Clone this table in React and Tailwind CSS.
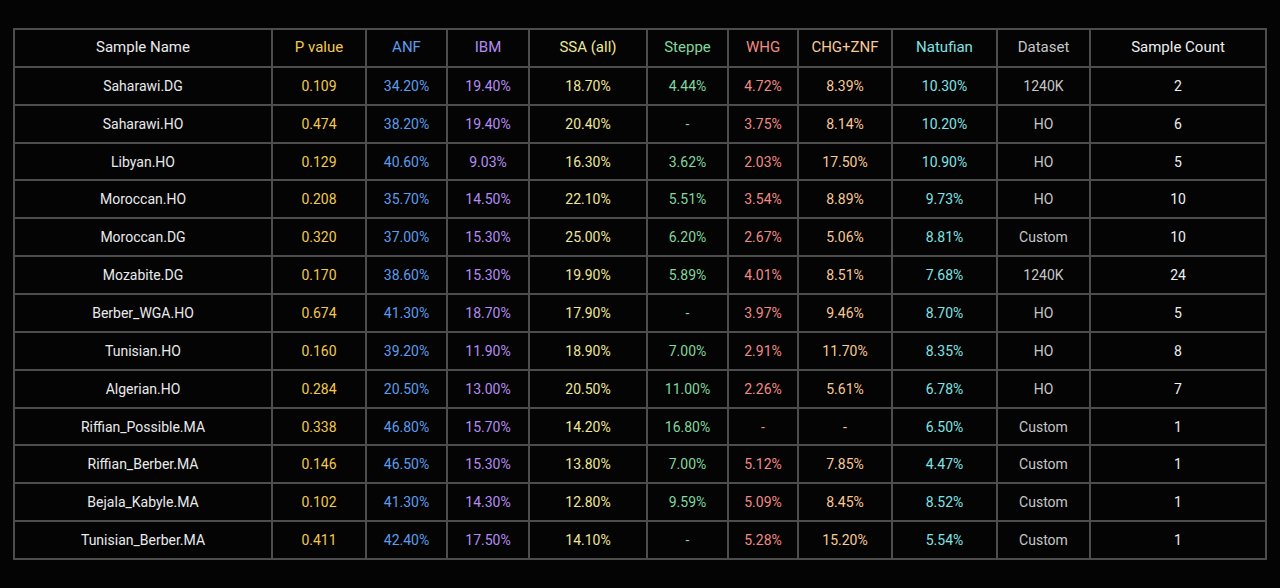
import React from "react";

const columns = [
  { key: "name", label: "Sample Name", width: "w-[258px]", color: "text-[#e8eaed]" },
  { key: "p", label: "P value", width: "w-[94px]", color: "text-[#f2c94c]" },
  { key: "anf", label: "ANF", width: "w-[81px]", color: "text-[#5d9cec]" },
  { key: "ibm", label: "IBM", width: "w-[82px]", color: "text-[#b48cf2]" },
  { key: "ssa", label: "SSA (all)", width: "w-[118px]", color: "text-[#eee69a]" },
  { key: "steppe", label: "Steppe", width: "w-[81px]", color: "text-[#7fd8a0]" },
  { key: "whg", label: "WHG", width: "w-[70px]", color: "text-[#f08a84]" },
  { key: "chg", label: "CHG+ZNF", width: "w-[94px]", color: "text-[#f8c896]" },
  { key: "natufian", label: "Natufian", width: "w-[105px]", color: "text-[#80e2e4]" },
  { key: "dataset", label: "Dataset", width: "w-[93px]", color: "text-[#c4c6c8]" },
  { key: "count", label: "Sample Count", width: "w-[176px]", color: "text-[#eceef0]" },
];

const rows = [
  ["Saharawi.DG", "0.109", "34.20%", "19.40%", "18.70%", "4.44%", "4.72%", "8.39%", "10.30%", "1240K", "2"],
  ["Saharawi.HO", "0.474", "38.20%", "19.40%", "20.40%", "-", "3.75%", "8.14%", "10.20%", "HO", "6"],
  ["Libyan.HO", "0.129", "40.60%", "9.03%", "16.30%", "3.62%", "2.03%", "17.50%", "10.90%", "HO", "5"],
  ["Moroccan.HO", "0.208", "35.70%", "14.50%", "22.10%", "5.51%", "3.54%", "8.89%", "9.73%", "HO", "10"],
  ["Moroccan.DG", "0.320", "37.00%", "15.30%", "25.00%", "6.20%", "2.67%", "5.06%", "8.81%", "Custom", "10"],
  ["Mozabite.DG", "0.170", "38.60%", "15.30%", "19.90%", "5.89%", "4.01%", "8.51%", "7.68%", "1240K", "24"],
  ["Berber_WGA.HO", "0.674", "41.30%", "18.70%", "17.90%", "-", "3.97%", "9.46%", "8.70%", "HO", "5"],
  ["Tunisian.HO", "0.160", "39.20%", "11.90%", "18.90%", "7.00%", "2.91%", "11.70%", "8.35%", "HO", "8"],
  ["Algerian.HO", "0.284", "20.50%", "13.00%", "20.50%", "11.00%", "2.26%", "5.61%", "6.78%", "HO", "7"],
  ["Riffian_Possible.MA", "0.338", "46.80%", "15.70%", "14.20%", "16.80%", "-", "-", "6.50%", "Custom", "1"],
  ["Riffian_Berber.MA", "0.146", "46.50%", "15.30%", "13.80%", "7.00%", "5.12%", "7.85%", "4.47%", "Custom", "1"],
  ["Bejala_Kabyle.MA", "0.102", "41.30%", "14.30%", "12.80%", "9.59%", "5.09%", "8.45%", "8.52%", "Custom", "1"],
  ["Tunisian_Berber.MA", "0.411", "42.40%", "17.50%", "14.10%", "-", "5.28%", "15.20%", "5.54%", "Custom", "1"],
];

export default function App() {
  return (
    <div
      className="min-h-screen bg-[#040404] pt-[28px] pl-[13px]"
      style={{ fontFamily: "Roboto, 'Liberation Sans', sans-serif" }}
    >
      <table className="border-collapse table-fixed w-[1253px]">
        <thead>
          <tr className="h-[37.86px]">
            {columns.map((col) => (
              <th
                key={col.key}
                className={`${col.width} ${col.color} border-2 border-[#4d4d4d] text-center font-normal text-[15px] leading-none p-0`}
              >
                {col.label}
              </th>
            ))}
          </tr>
        </thead>
        <tbody>
          {rows.map((row) => (
            <tr key={row[0]} className="h-[37.86px]">
              {row.map((cell, i) => (
                <td
                  key={columns[i].key}
                  className={`${columns[i].color} border-2 border-[#4d4d4d] text-center text-[14px] leading-none p-0`}
                >
                  {cell}
                </td>
              ))}
            </tr>
          ))}
        </tbody>
      </table>
    </div>
  );
}
